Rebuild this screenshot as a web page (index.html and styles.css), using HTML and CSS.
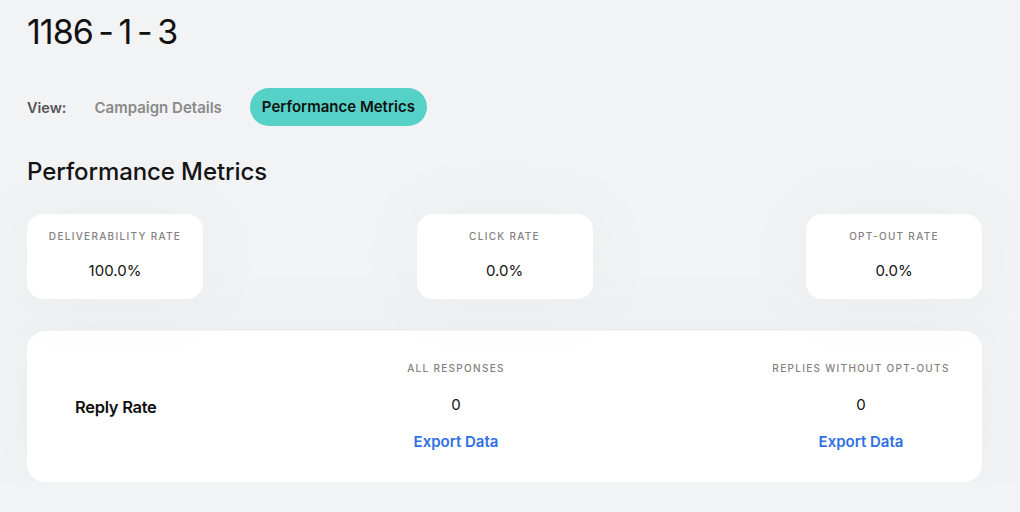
FILE: index.html
```html
<!DOCTYPE html>
<html>
<head>
<meta charset="utf-8">
<link rel="stylesheet" href="styles.css">
</head>
<body>
<main class="page">
  <h1 class="title">1186 - 1 - 3</h1>
  <nav class="view">
    <span class="view-label">View:</span>
    <span class="tab">Campaign Details</span>
    <span class="tab tab-active">Performance Metrics</span>
  </nav>
  <h2 class="section-title">Performance Metrics</h2>
  <div class="metrics">
    <div class="metric">
      <div class="label">DELIVERABILITY RATE</div>
      <div class="value">100.0%</div>
    </div>
    <div class="metric">
      <div class="label">CLICK RATE</div>
      <div class="value">0.0%</div>
    </div>
    <div class="metric">
      <div class="label">OPT-OUT RATE</div>
      <div class="value">0.0%</div>
    </div>
  </div>
  <div class="reply">
    <div class="reply-title">Reply Rate</div>
    <div class="stat">
      <div class="label">ALL RESPONSES</div>
      <div class="stat-value">0</div>
      <a class="export">Export Data</a>
    </div>
    <div class="stat stat-last">
      <div class="label">REPLIES WITHOUT OPT-OUTS</div>
      <div class="stat-value">0</div>
      <a class="export">Export Data</a>
    </div>
  </div>
</main>
</body>
</html>
```
FILE: styles.css
```css
html, body {
  margin: 0;
  padding: 0;
  background: #f2f3f5;
  font-family: Inter, "Noto Sans", sans-serif;
  color: #111;
}
.page {
  width: 955px;
  padding: 12px 0 0 27px;
}
.title {
  margin: 0;
  font-size: 34px;
  font-weight: 400;
  line-height: 40px;
  letter-spacing: -1px;
  word-spacing: -3px;
  color: #111;
}
.view {
  display: flex;
  align-items: center;
  margin-top: 36px;
  height: 38px;
}
.view-label {
  font-size: 14.5px;
  font-weight: 600;
  color: #555;
  margin-right: 28px;
}
.tab {
  font-size: 15px;
  font-weight: 600;
  color: #8a8a8a;
}
.tab-active {
  margin-left: 28px;
  background: #55d1c8;
  color: #111;
  border-radius: 19px;
  height: 38px;
  line-height: 38px;
  padding: 0 12px;
}
.section-title {
  margin: 31px 0 0;
  font-size: 24px;
  font-weight: 500;
  line-height: 30px;
  letter-spacing: -0.1px;
  color: #151515;
}
.metrics {
  display: flex;
  justify-content: space-between;
  margin-top: 27px;
}
.metric {
  width: 176px;
  height: 85px;
  background: #fff;
  border-radius: 16px;
  display: flex;
  flex-direction: column;
  align-items: center;
  justify-content: center;
  gap: 19px;
  padding-bottom: 3px;
  box-sizing: border-box;
  box-shadow: 0 0 80px 20px rgba(0, 0, 0, 0.018);
}
.label {
  font-size: 10px;
  line-height: 13px;
  letter-spacing: 1.3px;
  color: #857f7f;
  font-weight: 500;
}
.value {
  font-size: 15px;
  line-height: 18px;
  color: #111;
}
.reply {
  margin-top: 32px;
  height: 151px;
  background: #fff;
  border-radius: 18px;
  display: flex;
  align-items: center;
  padding: 0 31px 0 48px;
  box-sizing: border-box;
  box-shadow: 0 0 80px 20px rgba(0, 0, 0, 0.018);
}
.reply-title {
  flex: 1;
  font-size: 16.5px;
  font-weight: 600;
  letter-spacing: -0.3px;
  color: #111;
}
.stat {
  width: 180px;
  display: flex;
  flex-direction: column;
  align-items: center;
}
.stat-last {
  margin-left: 225px;
}
.stat-value {
  margin-top: 21px;
  font-size: 15px;
  line-height: 18px;
}
.export {
  margin-top: 18px;
  font-size: 15px;
  line-height: 19px;
  font-weight: 600;
  color: #2f6fe6;
  cursor: pointer;
}
```
